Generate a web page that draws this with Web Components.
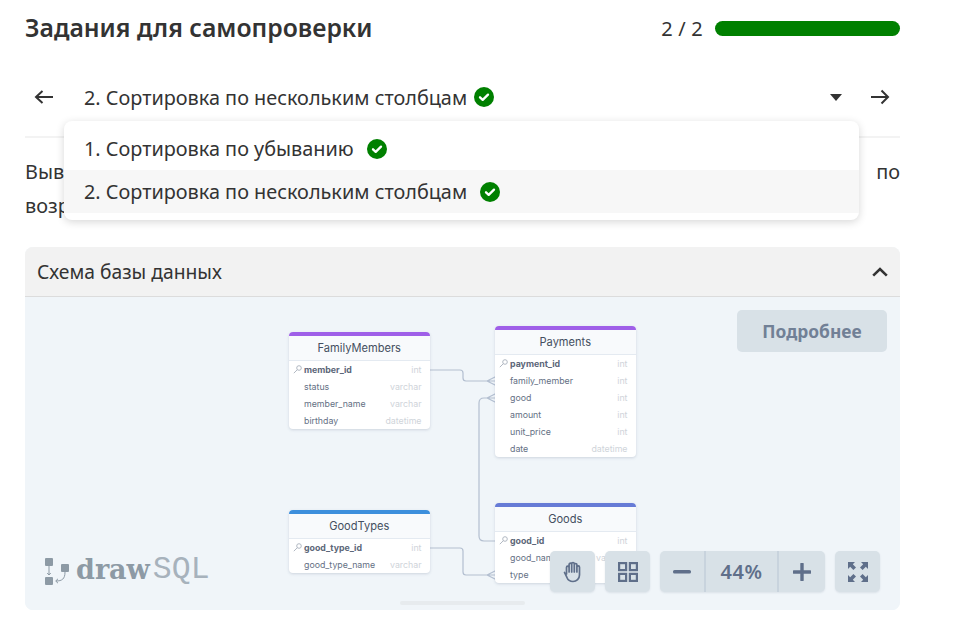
<!DOCTYPE html>
<html lang="ru"><head><meta charset="utf-8"><title>Задания</title>
<style>
html,body{margin:0;padding:0;background:#fff}
body{width:955px;height:624px;overflow:hidden;font-family:"Noto Sans","Open Sans",sans-serif;color:#333}
</style></head><body>
<x-app>
  <x-top slot="top" title-text="Задания для самопроверки" progress="2 / 2"></x-top>
  <x-nav slot="nav" label="2. Сортировка по нескольким столбцам">
    <x-item label="1. Сортировка по убыванию"></x-item>
    <x-item label="2. Сортировка по нескольким столбцам" active></x-item>
  </x-nav>
  <x-task slot="task"><div style="text-align-last:justify">Вывести все платежи, отсортированные по</div><div>возрастанию</div></x-task>
  <x-panel slot="panel" heading="Схема базы данных">
    <x-diagram>
      <x-table name="FamilyMembers" color="#9f5fe8" style="left:264px;top:35px">
        <x-row pk name="member_id" type="int"></x-row>
        <x-row name="status" type="varchar"></x-row>
        <x-row name="member_name" type="varchar"></x-row>
        <x-row name="birthday" type="datetime"></x-row>
      </x-table>
      <x-table name="Payments" color="#9f5fe8" style="left:470px;top:29px">
        <x-row pk name="payment_id" type="int"></x-row>
        <x-row name="family_member" type="int"></x-row>
        <x-row name="good" type="int"></x-row>
        <x-row name="amount" type="int"></x-row>
        <x-row name="unit_price" type="int"></x-row>
        <x-row name="date" type="datetime"></x-row>
      </x-table>
      <x-table name="Goods" color="#667bd6" style="left:470px;top:206px">
        <x-row pk name="good_id" type="int"></x-row>
        <x-row name="good_name" type="varchar"></x-row>
        <x-row name="type" type="int"></x-row>
      </x-table>
      <x-table name="GoodTypes" color="#3d8fdc" style="left:264px;top:213px">
        <x-row pk name="good_type_id" type="int"></x-row>
        <x-row name="good_type_name" type="varchar"></x-row>
      </x-table>
    </x-diagram>
  </x-panel>
</x-app>
<script>
function def(name, css, html){
  customElements.define(name, class extends HTMLElement{
    connectedCallback(){
      if(this.shadowRoot) return;
      const r=this.attachShadow({mode:'open'});
      const a=n=>this.getAttribute(n)||'';
      r.innerHTML='<style>'+css+'</style>'+(typeof html==='function'?html(a,this):html);
    }
  });
}
const CHECK='<svg width="20" height="20" viewBox="0 0 20 20" style="display:block;flex:none"><circle cx="10" cy="10" r="10" fill="#008000"/><path d="M6 10.3l2.7 2.6L14 7.6" fill="none" stroke="#fff" stroke-width="2.3" stroke-linecap="round" stroke-linejoin="round"/></svg>';
def('x-app',`:host{display:block;width:875px;padding:0 55px 0 25px;position:relative}`,
 `<slot name="top"></slot><slot name="nav"></slot><slot name="task"></slot><slot name="panel"></slot>`);
def('x-top',`:host{display:flex;align-items:center;justify-content:space-between;height:57px}
 h1{margin:-2px 0 0;font:600 24.750px/34px "Noto Sans",sans-serif;color:#333}
 .p{display:flex;align-items:center;gap:12px;font-size:20px;letter-spacing:.2px;color:#333}
 .b{width:185px;height:15px;border-radius:8px;background:#008000}`,
 a=>`<h1>${a('title-text')}</h1><div class="p"><span>${a('progress')}</span><div class="b"></div></div>`);
def('x-nav',`:host{display:flex;align-items:center;height:79px;box-sizing:content-box;border-bottom:2px solid #f3f3f3;position:relative;padding:0 10px 0 9px;font-size:19.850px;color:#333}
 .lab{display:flex;align-items:center;gap:7px;margin-left:30px;flex:1;line-height:28px;white-space:nowrap;padding-top:1px}
 .lab span{padding-top:2px}
 svg{display:block;flex:none}
 .caret{margin-right:28px}
 .menu{position:absolute;left:39px;top:64px;width:795px;height:99px;box-sizing:border-box;padding-top:6px;background:#fff;border-radius:8px;box-shadow:0 2px 8px rgba(0,0,0,.16);z-index:5}`,
 a=>`<svg width="20" height="16" viewBox="0 0 20 16"><path d="M19 8H2M8.500 2L2 8l6.500 6" fill="none" stroke="#333" stroke-width="2"/></svg>
 <div class="lab"><span>${a('label')}</span>${CHECK}</div>
 <svg class="caret" width="12" height="8" viewBox="0 0 12 8"><path d="M0 1h12L6 8z" fill="#333"/></svg>
 <svg width="20" height="16" viewBox="0 0 20 16"><path d="M1 8h17M11.500 1.500L18 8l-6.500 6.500" fill="none" stroke="#333" stroke-width="2"/></svg>
 <div class="menu"><slot></slot></div>`);
def('x-item',`:host{display:flex;align-items:center;gap:13px;height:43px;padding-left:20px;font-size:19.850px;color:#333;white-space:nowrap}
 :host([active]){background:#f7f7f7}`,
 a=>`<span>${a('label')}</span>${CHECK}`);
def('x-task',`:host{display:block;font-size:19.850px;line-height:34px;color:#333;margin-top:17px;height:76px;margin-bottom:16px}`,`<slot></slot>`);
def('x-panel',`:host{display:block;height:363px;border-radius:8px;overflow:hidden;background:#f0f5f9}
 .h{display:flex;align-items:center;justify-content:space-between;height:50px;box-sizing:border-box;padding:0 12px;background:#f2f2f2;border-bottom:1px solid #dcdcdc;font-size:19.300px;color:#333}
 svg{display:block}`,
 a=>`<div class="h"><span>${a('heading')}</span><svg width="16" height="10" viewBox="0 0 16 10"><path d="M1.200 8.600L8 2l6.800 6.600" fill="none" stroke="#333" stroke-width="2.600"/></svg></div><slot></slot>`);
const B='#d8e1e7', I='#5f6f8a';
def('x-diagram',`:host{display:block;position:relative;height:313px;overflow:hidden;background:#f0f5f9}
 .lines{position:absolute;left:0;top:0}
 .more{position:absolute;left:712px;top:13px;width:150px;height:42px;border-radius:5px;background:${B};color:#718096;font:700 17.400px/42px "Noto Sans",sans-serif;text-align:center}
 .logo{position:absolute;left:19px;top:253px;display:flex;align-items:center;color:#8d9aa5;height:40px;white-space:nowrap}
 .logo svg{display:block;position:relative;top:1px}
 .logo b{font:700 27px/40px "DejaVu Serif",serif;margin-left:-1px}
 .logo i{font:31.500px/40px "Liberation Mono",monospace;color:#a7b2bc;margin-left:3px}
 .c{position:absolute;top:254px;height:41px;background:${B};border-radius:5px;display:flex;align-items:center;justify-content:center;box-shadow:0 1px 2px rgba(120,140,160,.18)}
 .c svg{display:block}
 .z{left:635px;width:165px;justify-content:flex-start;color:${I};font:600 20px/41px "Noto Sans",sans-serif}
 .z span{display:flex;align-items:center;justify-content:center;height:41px;box-sizing:border-box}
 .z .m{width:46px;border-right:2px solid #c8d3dd}.z .v{width:73px;border-right:2px solid #c8d3dd;letter-spacing:.6px}.z .p{width:46px}
 .sb{position:absolute;left:375px;top:304px;width:125px;height:4px;border-radius:2px;background:#e7ebee}`,
 ()=>`<svg class="lines" width="875" height="313" fill="none" stroke="#b3bfd0" stroke-width="1.200">
   <path d="M404 73H435q3 0 3 3v5q0 3 3 3H470M462 84l9-4.500M462 84l9 4.500"/>
   <path d="M470 244H459q-5 0-5-5V106q0-5 5-5H470M462 101l9-4.500M462 101l9 4.500"/>
   <path d="M404 251H435q3 0 3 3v21q0 3 3 3H470M462 278l9-4.500M462 278l9 4.500"/>
 </svg>
 <slot></slot>
 <div class="more">Подробнее</div>
 <div class="logo"><svg width="33" height="32" viewBox="0 0 33 32"><g fill="#8d9aa5"><rect x="1" y="3" width="8" height="8" rx="1"/><rect x="1" y="22" width="8" height="8" rx="1"/><rect x="17" y="9" width="8" height="8" rx="1"/></g><path d="M5 11v9M3.200 18l1.800 2 1.800-2M21 17c0 7-3 9-9 9M14 23.800l-2.300 2.200 2.300 2.200" fill="none" stroke="#8d9aa5" stroke-width="1"/></svg><b>draw</b><i>SQL</i></div>
 <div class="c" style="left:525px;width:45px"><svg width="20" height="22" viewBox="0 0 20 22" fill="none" stroke="${I}" stroke-width="1.700" stroke-linecap="round" stroke-linejoin="round"><path d="M3.500 13V6.500a1.300 1.300 0 0 1 2.600 0V11M6.100 11V3.500a1.300 1.300 0 0 1 2.600 0V11M8.700 11V2.800a1.300 1.300 0 0 1 2.600 0V11M11.300 11V3.800a1.300 1.300 0 0 1 2.600 0V11M13.900 11V6.200a1.300 1.300 0 0 1 2.600 0V14a6.500 6.500 0 0 1-6.500 6.500 6.700 6.700 0 0 1-6.200-4.300L1.500 11.500"/></svg></div>
 <div class="c" style="left:580px;width:45px"><svg width="20" height="20" viewBox="0 0 20 20" fill="none" stroke="${I}" stroke-width="2.200"><rect x="1.100" y="1.100" width="7" height="7"/><rect x="11.900" y="1.100" width="7" height="7"/><rect x="1.100" y="11.900" width="7" height="7"/><rect x="11.900" y="11.900" width="7" height="7"/></svg></div>
 <div class="c z"><span class="m"><svg width="18" height="4" viewBox="0 0 18 4"><rect width="18" height="3.600" rx="1.600" fill="${I}"/></svg></span><span class="v">44%</span><span class="p"><svg width="18" height="18" viewBox="0 0 18 18"><path d="M1 9h16M9 1v16" stroke="${I}" stroke-width="3.400" stroke-linecap="round"/></svg></span></div>
 <div class="c" style="left:810px;width:45px"><svg width="20" height="20" viewBox="0 0 20 20" fill="${I}"><path d="M0 0h7L4.800 2.200 8 5.400 5.400 8 2.200 4.800 0 7zM20 0v7l-2.200-2.200L14.600 8 12 5.400l3.200-3.200L13 0zM0 20v-7l2.200 2.200L5.400 12 8 14.600l-3.200 3.200L7 20zM20 20h-7l2.200-2.200L12 14.600 14.600 12l3.200 3.200L20 13z"/></svg></div>
 <div class="sb"></div>`);
def('x-table',`:host{position:absolute;display:block;width:140.500px;background:#fff;border-radius:4px;box-shadow:0 1px 3px rgba(80,100,130,.22);font-family:Inter,sans-serif;overflow:hidden}
 .hd{box-sizing:border-box;height:29px;border-top:4px solid;background:#f8fafc;border-bottom:1px solid #e4eaf1;text-align:center;font-size:11.100px;line-height:25px;color:#444f60}`,
 a=>`<div class="hd" style="border-top-color:${a('color')}">${a('name')}</div><slot></slot>`);
def('x-row',`:host{display:flex;align-items:center;justify-content:space-between;height:17px;padding:0 8px 0 15px;position:relative;font-size:8.800px;color:#647084;white-space:nowrap}
 :host([pk]) .n{font-weight:700;color:#5c6779}
 .t{color:#cfd4da}
 svg{position:absolute;left:4px;top:4px}`,
 (a,el)=>`${el.hasAttribute('pk')?'<svg width="9" height="9" viewBox="0 0 9 9" fill="none" stroke="#a8b0bb" stroke-width=".9"><circle cx="6" cy="3" r="2.300"/><path d="M4.300 4.700L.8 8.200"/></svg>':''}<span class="n">${a('name')}</span><span class="t">${a('type')}</span>`);
</script>
</body></html>
